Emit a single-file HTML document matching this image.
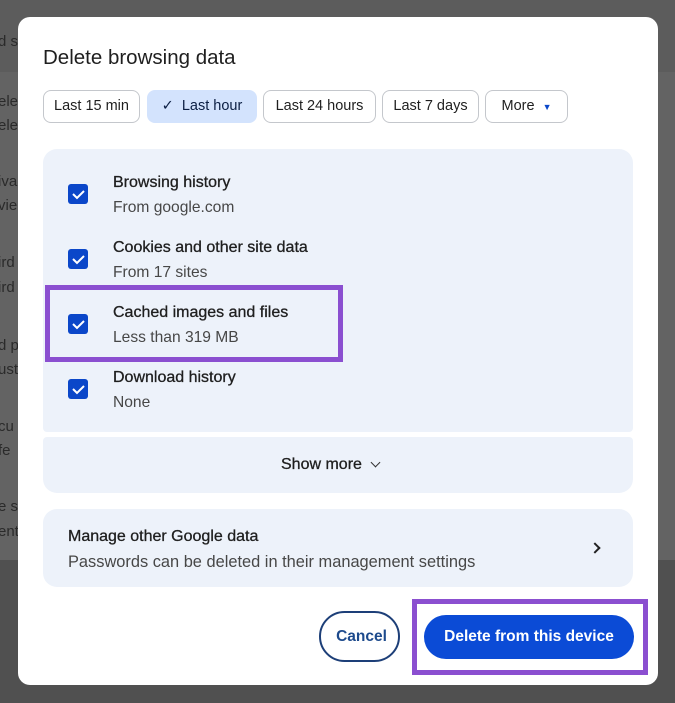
<!DOCTYPE html><html><head><style>
*{margin:0;padding:0;box-sizing:border-box}
body{width:675px;height:703px;position:relative;overflow:hidden;background:#505050;font-family:"Liberation Sans",sans-serif}
.a{position:absolute}
.pg{left:0;top:0;width:675px;height:560px;background:#636363}
.bt{left:0;top:0;width:675px;height:72px;background:#5c5c5c}
.lt{left:-2px;font-size:15px;color:#2a2a2a;white-space:nowrap}
.dlg{left:18px;top:17px;width:640px;height:668px;background:#fff;border-radius:12px}
.t{left:43px;top:46px;font-size:20.5px;color:#1f1f1f}
.chip{top:90px;height:33px;border:1px solid #c4c7cc;border-radius:8px;font-size:14.5px;color:#1f1f1f;line-height:31px;text-align:center}
.sel{background:#d3e3fd;border-color:#d3e3fd;color:#0b1f44}
.pan{background:#edf2fa}
.cb{width:20px;height:20px;background:#0b47c9;border-radius:3px;left:68px}
.h{left:113px;font-size:16px;color:#1f1f1f;-webkit-text-stroke:0.3px #1f1f1f}
.s{left:113px;font-size:15.6px;color:#474747}
</style></head><body>
<div class="a pg"></div><div class="a bt"></div>
<div class="a lt" style="top:33px">d s</div>
<div class="a lt" style="top:93px">elet</div><div class="a lt" style="top:117px">elet</div>
<div class="a lt" style="top:173px">iva</div><div class="a lt" style="top:197px">vie</div>
<div class="a lt" style="top:254px">ird</div><div class="a lt" style="top:279px">ird</div>
<div class="a lt" style="top:337px">d p</div><div class="a lt" style="top:361px">ust</div>
<div class="a lt" style="top:418px">cu</div><div class="a lt" style="top:442px">fe</div>
<div class="a lt" style="top:498px">e s</div><div class="a lt" style="top:523px">ent</div>
<div class="a dlg"></div>
<div class="a t">Delete browsing data</div>
<div class="a chip" style="left:43px;width:97px">Last 15 min</div>
<div class="a chip sel" style="left:147px;width:110px">✓&nbsp; Last hour</div>
<div class="a chip" style="left:263px;width:113px">Last 24 hours</div>
<div class="a chip" style="left:382px;width:97px">Last 7 days</div>
<div class="a chip" style="left:485px;width:83px">More &nbsp;<span style="font-size:9px;color:#0b47c9">▼</span></div>
<div class="a pan" style="left:43px;top:149px;width:590px;height:283px;border-radius:14px 14px 4px 4px"></div>
<div class="a pan" style="left:43px;top:437px;width:590px;height:56px;border-radius:4px 4px 14px 14px"></div>
<div class="a" style="left:281px;top:456px;font-size:16px;color:#1f1f1f;-webkit-text-stroke:0.3px #1f1f1f">Show more <span style="display:inline-block;width:7px;height:7px;border-right:1.7px solid #333;border-bottom:1.7px solid #333;transform:rotate(45deg);margin:0 0 3px 6px"></span></div>
<div class="a pan" style="left:43px;top:509px;width:590px;height:78px;border-radius:14px"></div>
<div class="a h" style="left:68px;top:528px">Manage other Google data</div>
<div class="a s" style="left:68px;top:553px;font-size:16.4px">Passwords can be deleted in their management settings</div>
<div class="a" style="left:591px;top:544px;width:8px;height:8px;border-right:2px solid #222;border-top:2px solid #222;transform:rotate(45deg)"></div>
<div class="a cb" style="top:184px"></div><div class="a cb" style="top:249px"></div><div class="a cb" style="top:314px"></div><div class="a cb" style="top:379px"></div>
<svg class="a" style="left:68px;top:0" width="20" height="400"><g fill="none" stroke="#fff" stroke-width="2"><path d="M5 194l4 4 7-7"/><path d="M5 259l4 4 7-7"/><path d="M5 324l4 4 7-7"/><path d="M5 389l4 4 7-7"/></g></svg>
<div class="a h" style="top:174px">Browsing history</div><div class="a s" style="top:199px">From google.com</div>
<div class="a h" style="top:239px">Cookies and other site data</div><div class="a s" style="top:264px">From 17 sites</div>
<div class="a h" style="top:304px">Cached images and files</div><div class="a s" style="top:329px">Less than 319 MB</div>
<div class="a h" style="top:369px">Download history</div><div class="a s" style="top:394px">None</div>
<div class="a" style="left:45px;top:285px;width:298px;height:77px;border:5px solid #8b4fd0"></div>
<div class="a" style="left:319px;top:611px;width:81px;height:51px;border:2px solid #1d3f78;border-radius:26px;font-size:15.5px;font-weight:bold;color:#1d4a8c;text-align:center;line-height:47px;padding-left:4px">Cancel</div>
<div class="a" style="left:412px;top:599px;width:236px;height:76px;border:5px solid #8b4fd0"></div>
<div class="a" style="left:424px;top:615px;width:210px;height:44px;background:#0b4bd6;border-radius:22px;font-size:15.5px;font-weight:bold;color:#fff;text-align:center;line-height:44px">Delete from this device</div>
</body></html>
